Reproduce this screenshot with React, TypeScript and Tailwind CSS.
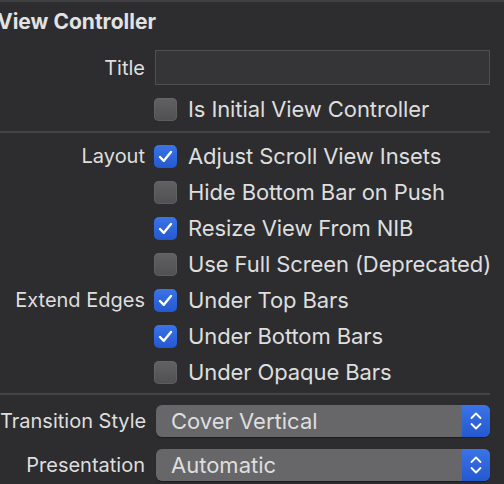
import React from 'react';

const font = { fontFamily: 'Inter, "Noto Sans", sans-serif' };

const Checkbox = ({ checked }: { checked: boolean }) =>
  checked ? (
    <span className="flex h-[23px] w-[23px] shrink-0 items-center justify-center rounded-[5px] bg-gradient-to-b from-[#3a74e6] to-[#2558d0]">
      <svg width="15" height="13" viewBox="0 0 15 13" fill="none">
        <path d="M2 7 L5.8 10.8 L13 2" stroke="white" strokeWidth="2.4" strokeLinecap="round" strokeLinejoin="round" />
      </svg>
    </span>
  ) : (
    <span className="h-[23px] w-[23px] shrink-0 rounded-[5px] bg-gradient-to-b from-[#616164] to-[#505053] shadow-[inset_0_0_0_0.5px_#6a6a6d]" />
  );

const CheckRow = ({ label, text, checked }: { label?: string; text: string; checked: boolean }) => (
  <div className="grid h-[36px] grid-cols-[145px_1fr] items-center gap-x-[9px]">
    <span className="whitespace-nowrap text-right text-[20px]">{label}</span>
    <div className="flex items-center gap-[11px]">
      <Checkbox checked={checked} />
      <span className="whitespace-nowrap text-[22px] tracking-[-0.1px]">{text}</span>
    </div>
  </div>
);

const Popup = ({ label, value }: { label: string; value: string }) => (
  <div className="grid h-[32px] grid-cols-[145px_1fr] items-center gap-x-[11px]">
    <span className="whitespace-nowrap text-right text-[20px]">{label}</span>
    <div className="flex h-[32px] w-[334px] overflow-hidden rounded-[6px] bg-[#67676a] shadow-[0_1px_1px_rgba(0,0,0,0.35)]">
      <span className="flex-1 pl-[15px] text-[22px] leading-[32px]">{value}</span>
      <span className="flex w-[28px] items-center justify-center bg-gradient-to-b from-[#3a74e6] to-[#2558d0]">
        <svg width="14" height="22" viewBox="0 0 14 22" fill="none">
          <path d="M2.5 8 L7 3.5 L11.5 8" stroke="white" strokeWidth="1.8" strokeLinecap="round" strokeLinejoin="round" />
          <path d="M2.5 14 L7 18.5 L11.5 14" stroke="white" strokeWidth="1.8" strokeLinecap="round" strokeLinejoin="round" />
        </svg>
      </span>
    </div>
  </div>
);

const App = () => {
  return (
    <div className="h-[484px] w-[504px] overflow-hidden border-t-2 border-[#404043] bg-[#2d2d30] text-[#dedede]" style={font}>
      <div className="-ml-[3px] flex h-[40px] items-center whitespace-nowrap text-[21px] font-bold text-[#e2e2e2]">View Controller</div>
      <div className="mt-[8px] grid grid-cols-[145px_1fr] items-center gap-x-[10px]">
        <span className="text-right text-[20px]">Title</span>
        <div className="h-[35px] w-[335px] border border-[#505053] bg-[#353538]" />
      </div>
      <div className="mt-[6px]">
        <CheckRow text="Is Initial View Controller" checked={false} />
      </div>
      <div className="mt-[4px] h-[2px] w-[490px] bg-[#434346]" />
      <div className="mt-[5px]">
        <CheckRow label="Layout" text="Adjust Scroll View Insets" checked />
        <CheckRow text="Hide Bottom Bar on Push" checked={false} />
        <CheckRow text="Resize View From NIB" checked />
        <CheckRow text="Use Full Screen (Deprecated)" checked={false} />
        <CheckRow label="Extend Edges" text="Under Top Bars" checked />
        <CheckRow text="Under Bottom Bars" checked />
        <CheckRow text="Under Opaque Bars" checked={false} />
      </div>
      <div className="mt-[3px] h-[2px] w-[490px] bg-[#434346]" />
      <div className="mt-[10px] flex flex-col gap-[12px]">
        <Popup label="Transition Style" value="Cover Vertical" />
        <Popup label="Presentation" value="Automatic" />
      </div>
    </div>
  );
};

export default App;
